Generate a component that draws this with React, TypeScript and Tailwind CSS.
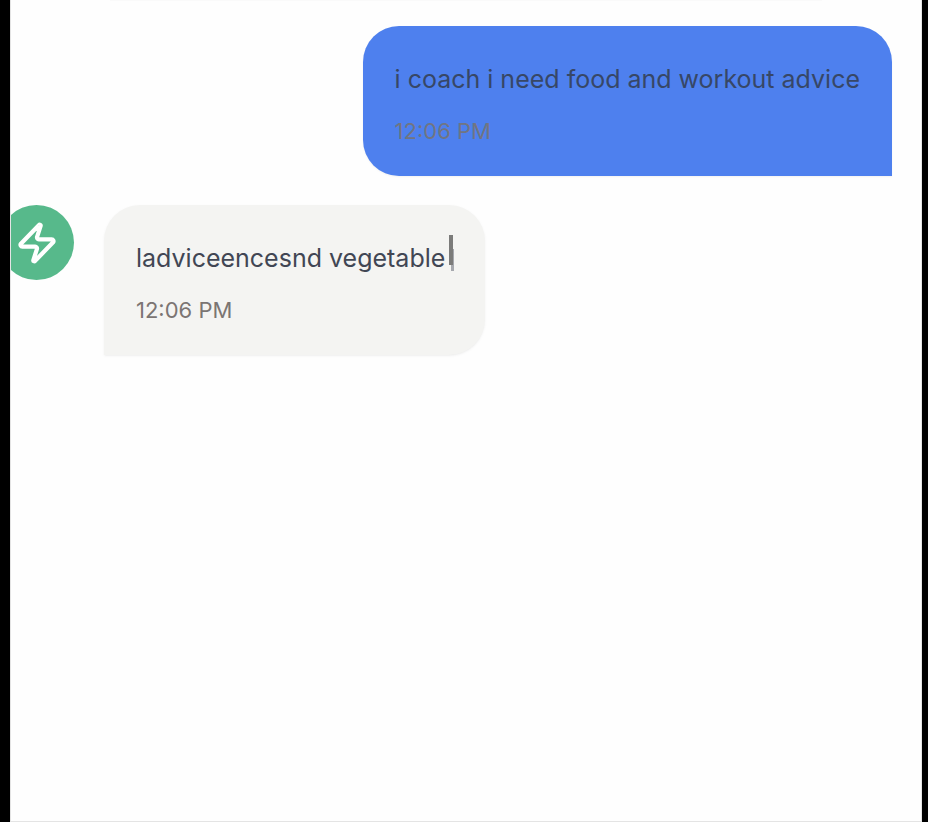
import { Zap } from "lucide-react";

type Message = { text: string; time: string };

const sent: Message = { text: "i coach i need food and workout advice", time: "12:06 PM" };
const received: Message = { text: "ladviceencesnd vegetable", time: "12:06 PM" };

function SentMessage({ text, time }: Message) {
  return (
    <li className="flex justify-end">
      <div className="rounded-[36px] rounded-br-none bg-[#4e80ee] px-8 py-[30px] shadow-xs">
        <p className="text-[25px] leading-[46px] text-[#374766]">{text}</p>
        <time className="mt-[14px] block text-[22px] leading-[30px] text-[#717582]">{time}</time>
      </div>
    </li>
  );
}

function TypingMessage({ text, time }: Message) {
  return (
    <li className="flex items-start gap-[30px]">
      <div className="-ml-[41px] flex size-[75px] shrink-0 items-center justify-center rounded-full bg-[#57b98b] text-white">
        <Zap size={44} strokeWidth={2.3} aria-hidden="true" />
      </div>
      <div className="rounded-[36px] rounded-bl-none bg-[#f4f4f2] px-8 py-[30px] shadow-sm shadow-black/5">
        <p className="flex text-[25px] leading-[46px] text-[#414654]">
          {text}
          <span className="relative ml-1 w-1" aria-hidden="true">
            <span className="absolute top-[14px] left-[2px] h-[22px] w-[3px] bg-[#a6a8ae]" />
            <span className="absolute top-0 left-0 h-[30px] w-1 bg-[#7b7b7a]" />
          </span>
        </p>
        <time className="mt-[14px] block text-[22px] leading-[30px] text-[#7b7573]">{time}</time>
      </div>
    </li>
  );
}

export default function App() {
  return (
    <div className="flex min-h-screen bg-black pr-[6px] pl-[10px] font-['Inter',sans-serif]">
      <main className="flex-1 overflow-hidden border-x border-b border-[#e4e4e4] bg-[#fefefe] px-[29px]">
        <div className="mx-[70px] h-px bg-[#fafafa]" />
        <ul className="flex flex-col gap-[29px] pt-[25px]">
          <SentMessage {...sent} />
          <TypingMessage {...received} />
        </ul>
      </main>
    </div>
  );
}
